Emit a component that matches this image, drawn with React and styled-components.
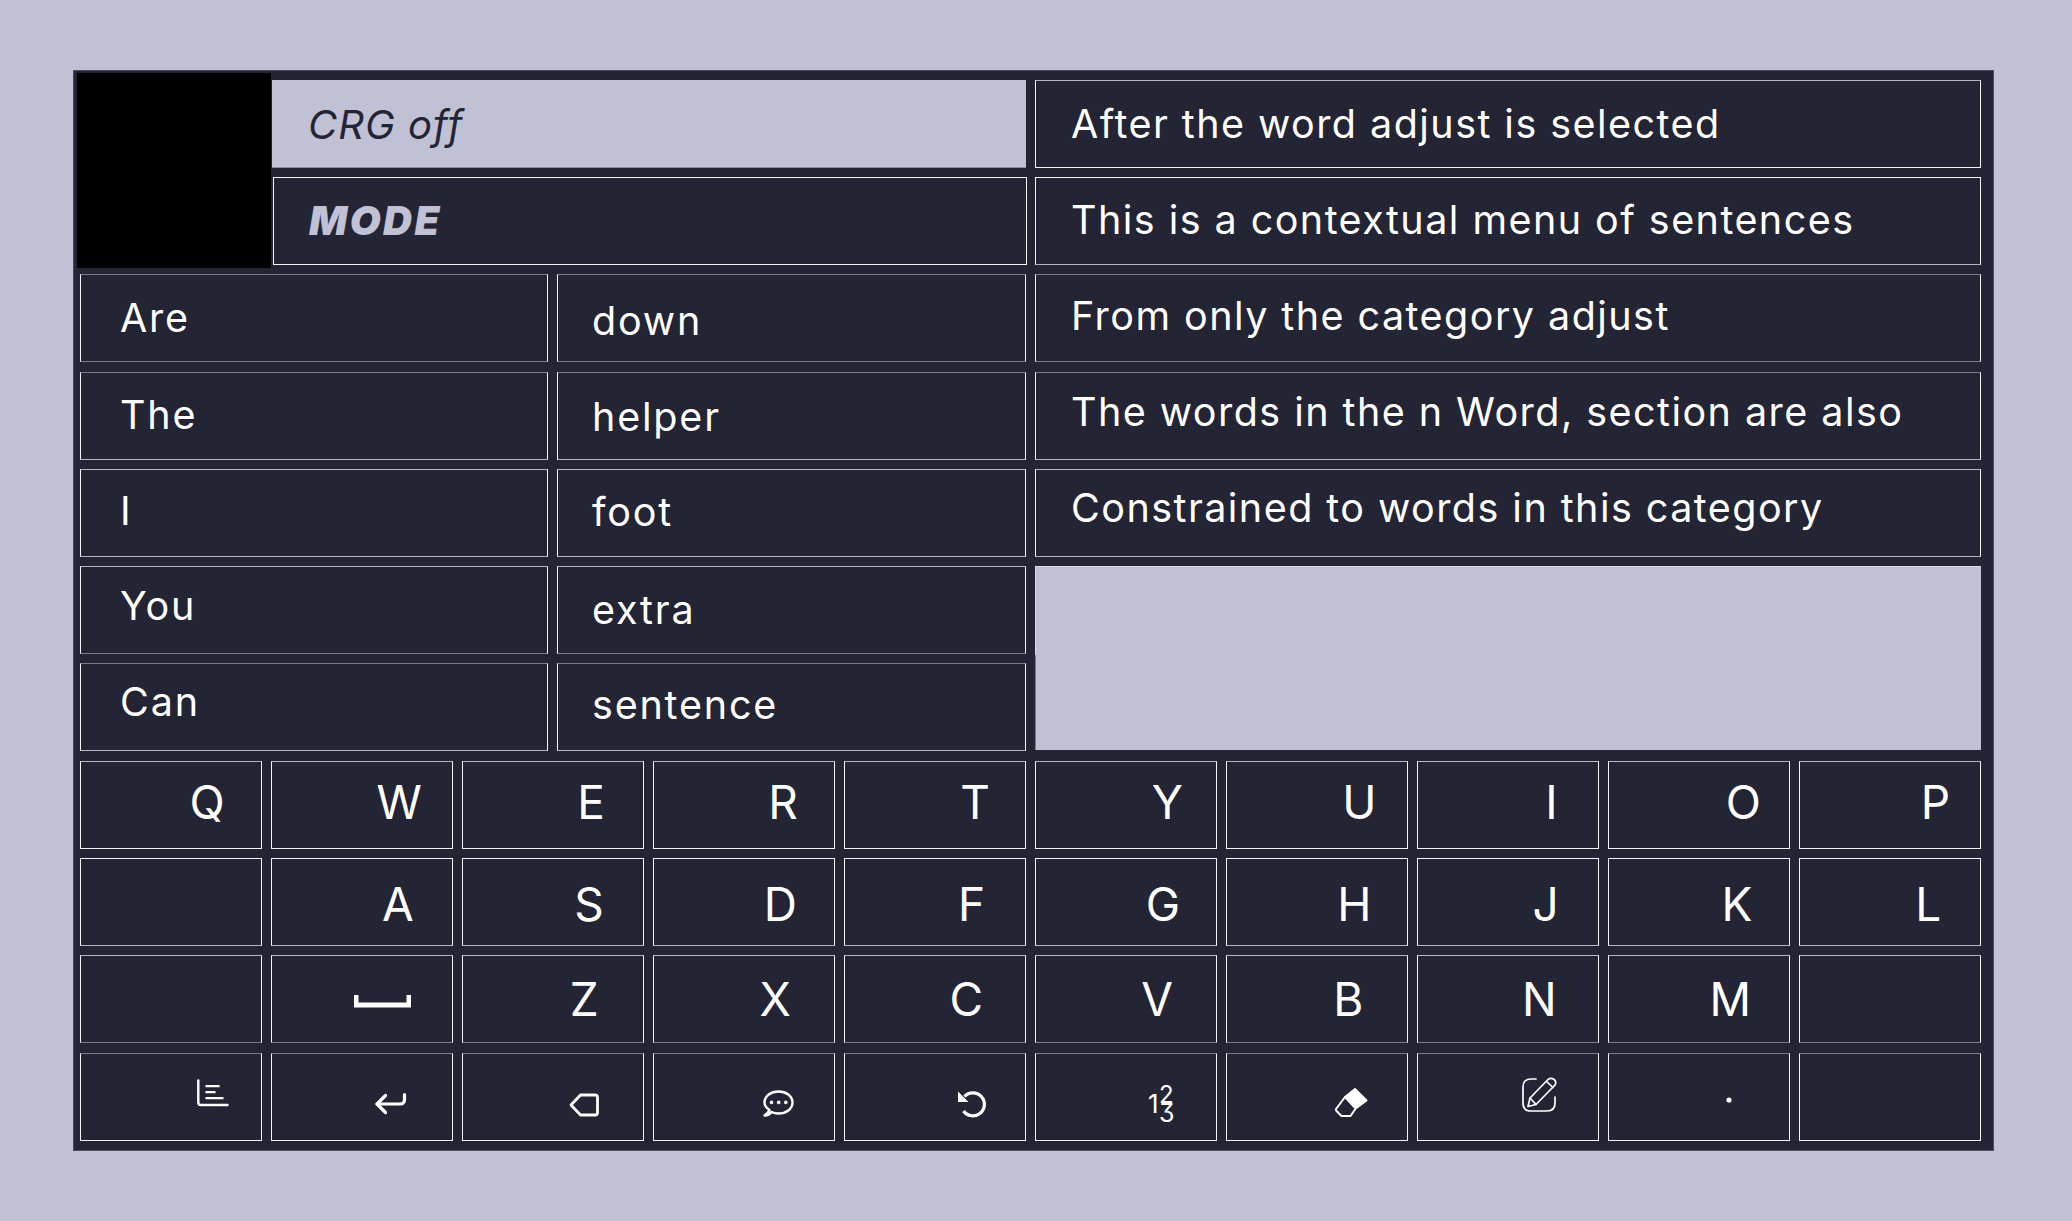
import React from "react";
import styled, { createGlobalStyle } from "styled-components";

const NAVY = "#232534";
const LILAC = "#c0c1d4";
const TONE = { W: "#f4f4f6", L: "#b4b4ba", G: "#7b7b86" };
const ROW_TONES = [
  ["L", "W"], ["W", "L"], ["G", "G"], ["G", "L"], ["L", "L"], ["L", "G"], ["G", "L"],
  ["L", "W"], ["W", "L"], ["L", "G"], ["G", "W"],
];

const Global = createGlobalStyle`
  html, body { margin: 0; padding: 0; background: ${LILAC}; }
  body { font-family: Inter, "Liberation Sans", sans-serif; }
`;

const Page = styled.div`
  width: 2072px;
  height: 1221px;
  box-sizing: border-box;
  padding: 70px 0 0 73px;
`;

const Panel = styled.main`
  width: 1921px;
  height: 1081px;
  box-sizing: border-box;
  border: 1px solid #4b4d5d;
  background: ${NAVY};
  padding: 8.7px 0 0 6px;
  display: flex;
  flex-direction: column;
  gap: 9.3px;
`;

const Upper = styled.section`
  display: grid;
  grid-template-columns: 182px 277px 469px 946px;
  grid-template-rows: repeat(7, 88px);
  column-gap: 9px;
  row-gap: 9.3px;
`;

const Keyboard = styled.section`
  display: grid;
  grid-template-columns: repeat(10, 182px);
  grid-template-rows: repeat(4, 88px);
  column-gap: 9.05px;
  row-gap: 9.3px;
`;

const Cell = styled.div`
  box-sizing: border-box;
  border: 1px solid #f4f4f6;
  border-top-color: ${(p) => TONE[ROW_TONES[p.$row][0]]};
  border-bottom-color: ${(p) => TONE[ROW_TONES[p.$row][1]]};
  color: #fff;
  display: flex;
  align-items: center;
  min-width: 0;
`;

const Avatar = styled.div`
  grid-column: 1;
  grid-row: 1 / span 2;
  background: #000;
  margin: -7px -9px -3px -3px;
`;

const StatusCell = styled.div`
  grid-column: 2 / span 2;
  grid-row: 1;
  margin-left: 1px;
  background: ${LILAC};
  border-bottom: 1px solid #8b8c9e;
  color: ${NAVY};
  display: flex;
  align-items: center;
  padding: 2px 0 0 36px;
  font-size: 40px;
  font-style: italic;
  font-weight: 400;
  letter-spacing: 1px;
`;

const ModeCell = styled(Cell)`
  grid-column: 2 / span 2;
  grid-row: 2;
  margin: 0 -1px 0 2px;
  border-color: #f4f4f6;
  padding: 0 0 0 35px;
  color: ${LILAC};
  font-size: 40px;
  font-style: italic;
  font-weight: 900;
  letter-spacing: 2.4px;
`;

const WordCell = styled(Cell)`
  grid-column: ${(p) => (p.$second ? "3" : "1 / span 2")};
  grid-row: ${(p) => p.$row + 1};
  padding: ${(p) => (p.$second ? "5px" : "0")} 0 ${(p) => p.$lift * 2}px ${(p) => (p.$second ? "34px" : "39px")};
  font-size: 39.5px;
  font-weight: 400;
  letter-spacing: 1.8px;
`;

const SentenceCell = styled(Cell)`
  grid-column: 4;
  grid-row: ${(p) => p.$row + 1};
  padding: 0 0 ${(p) => p.$lift * 2}px 35px;
  font-size: 39.5px;
  font-weight: 400;
  letter-spacing: 1.45px;
  white-space: nowrap;
`;

const BlankBlock = styled.div`
  grid-column: 4;
  grid-row: 6 / span 2;
  margin-bottom: 1px;
  background:
    linear-gradient(#d9dae6, #d9dae6) left top / 1px 88px no-repeat,
    linear-gradient(#7b7c90, #7b7c90) left bottom / 1px 96px no-repeat,
    ${LILAC};
  border-top: 1px solid #d9dae6;
`;

const LetterKey = styled(Cell)`
  justify-content: flex-end;
  padding-right: ${(p) => p.$inset}px;
  padding-top: ${(p) => Math.max(p.$shift, 0)}px;
  padding-bottom: ${(p) => Math.max(-p.$shift, 0)}px;
  font-size: 46px;
  font-weight: 400;
`;

const LetterMark = styled.span`
  width: 0;
  display: flex;
  justify-content: center;
`;

const IconKey = styled(Cell)`
  align-items: flex-start;
  justify-content: flex-end;
  padding: ${(p) => p.$top}px ${(p) => p.$right}px 0 0;
`;

const Svg = styled.svg`
  display: block;
  overflow: visible;
  fill: none;
  stroke: #fff;
  stroke-linecap: round;
  stroke-linejoin: round;
`;

const NumberGlyph = styled.text`
  fill: #fff;
  stroke: none;
  font-family: Inter, sans-serif;
  font-weight: 400;
  font-feature-settings: "cv09";
`;

const ChartIcon = () => (
  <Svg width="31" height="26" viewBox="0 0 31 26" strokeWidth="2.4">
    <path d="M1.3 0.5V22.5Q1.3 25 3.8 25H30.5" />
    <path d="M8.5 6.2H22.5M8.5 12.2H18.5M8.5 18.2H26.5" strokeLinecap="butt" strokeWidth="2.2" />
  </Svg>
);
const EnterIcon = () => (
  <Svg width="31" height="21" viewBox="0 0 31 21" strokeWidth="3.2">
    <path d="M29.5 1.5V6.5Q29.5 11 25 11H2" />
    <path d="M10.5 2.5L2 11L10.5 19.5" />
  </Svg>
);
const BackspaceIcon = () => (
  <Svg width="30" height="24" viewBox="0 0 30 24" strokeWidth="2.8">
    <path d="M2 12L11.5 2H26Q28.5 2 28.5 4.5V19.5Q28.5 22 26 22H11.5Z" />
  </Svg>
);
const ChatIcon = () => (
  <Svg width="31" height="27" viewBox="0 0 31 27" strokeWidth="2.4">
    <path d="M6.5 20C3.5 18 1.5 15.5 1.5 12.5C1.5 6 8 1.5 15.5 1.5S29.5 6 29.5 12.5S23 23.5 15.5 23.5C13 23.5 10.5 23 8.5 22C7 24 4.5 25.5 1.5 25.5C3.5 24 5.5 22.5 6.5 20Z" />
    <circle cx="8.5" cy="12.4" r="1.8" fill="#fff" stroke="none" />
    <circle cx="15.7" cy="12.4" r="1.8" fill="#fff" stroke="none" />
    <circle cx="22.8" cy="12.4" r="1.8" fill="#fff" stroke="none" />
  </Svg>
);
const UndoIcon = () => (
  <Svg width="29" height="27" viewBox="0 0 29 27" strokeWidth="3.2">
    <path d="M6.5 6.5A11.5 11.5 0 1 1 5.5 21" strokeLinecap="butt" />
    <path d="M0 1.5V12H10.5Z" fill="#fff" stroke="none" />
  </Svg>
);
const NumbersIcon = () => (
  <Svg width="24" height="35" viewBox="0 0 24 35">
    <NumberGlyph>
      <tspan x="-1" y="26" fontSize="26">1</tspan>
      <tspan x="10" y="16" fontSize="24">2</tspan>
      <tspan x="10" y="35" fontSize="25">3</tspan>
    </NumberGlyph>
  </Svg>
);
const EraserIcon = () => (
  <Svg width="32" height="29" viewBox="0 0 32 29" strokeWidth="2">
    <path d="M20 1L31.5 12.5L20.7 20.5L10 9Z" fill="#fff" />
    <path d="M10 9L1 21Q0.5 22 1.5 23L6.5 28H15.5L20.7 20.5" />
  </Svg>
);
const EditIcon = () => (
  <Svg width="35" height="35" viewBox="0 0 35 35" strokeWidth="1.7">
    <path d="M14 2H9Q1 2 1 10V26Q1 34 9 34H25Q33 34 33 26V20" />
    <path d="M6 29.5L8 21L26 2.5Q28.5 0.5 31.5 2Q35 4.5 33 8L14 27.5Z" />
    <path d="M8 21L14 27.5M24.5 4.5L31 10.5" />
  </Svg>
);
const DotIcon = () => (
  <Svg width="6" height="6" viewBox="0 0 6 6">
    <circle cx="3" cy="3" r="2.6" fill="#fff" stroke="none" />
  </Svg>
);
const SpaceIcon = () => (
  <Svg width="57" height="13" viewBox="0 0 57 13">
    <path d="M0 0H4.5V7.5H52.5V0H57V12.5H0Z" fill="#fff" stroke="none" />
  </Svg>
);

const WORDS_A = [
  { text: "Are", lift: 0 },
  { text: "The", lift: 1 },
  { text: "I", lift: 2 },
  { text: "You", lift: 4 },
  { text: "Can", lift: 5 },
];
const WORDS_B = [
  { text: "down", lift: 0 },
  { text: "helper", lift: 1 },
  { text: "foot", lift: 3 },
  { text: "extra", lift: 3 },
  { text: "sentence", lift: 5 },
];
const SENTENCES = [
  { text: "After the word adjust is selected", lift: 0 },
  { text: "This is a contextual menu of sentences", lift: 1 },
  { text: "From only the category adjust", lift: 2 },
  { text: "The words in the n Word, section are also", lift: 4 },
  { text: "Constrained to words in this category", lift: 5 },
];

const ROW_ONE = "QWERTYUIOP".split("");
const ROW_TWO = ["", ..."ASDFGHJKL".split("")];
const ROW_THREE = ["", "space", ..."ZXCVBNM".split(""), ""];
const ICON_ROW = [
  { icon: <ChartIcon />, top: 26, right: 33 },
  { icon: <EnterIcon />, top: 39, right: 46 },
  { icon: <BackspaceIcon />, top: 39, right: 44 },
  { icon: <ChatIcon />, top: 36, right: 40 },
  { icon: <UndoIcon />, top: 36, right: 38 },
  { icon: <NumbersIcon />, top: 33, right: 43 },
  { icon: <EraserIcon />, top: 34, right: 40 },
  { icon: <EditIcon />, top: 23, right: 41 },
  { icon: <DotIcon />, top: 43, right: 57 },
  { icon: null, top: 0, right: 0 },
];

const insetFor = (row, col) => {
  if (row === 7) return 54 - col;
  if (row === 8) return 54.5 - col * 0.25;
  return 59;
};

const letterRow = (letters, row, shift) =>
  letters.map((letter, col) =>
    letter === "space" ? (
      <IconKey key={`${row}-${col}`} $row={row} $top={39} $right={41}>
        <SpaceIcon />
      </IconKey>
    ) : (
      <LetterKey key={`${row}-${col}`} $row={row} $inset={insetFor(row, col)} $shift={shift}>
        <LetterMark>{letter}</LetterMark>
      </LetterKey>
    )
  );

export default function App() {
  return (
    <Page>
      <Global />
      <Panel>
        <Upper>
          <Avatar />
          <StatusCell>CRG off</StatusCell>
          <ModeCell $row={1}>MODE</ModeCell>
          {WORDS_A.map((w, i) => (
            <WordCell key={w.text} $row={i + 2} $lift={w.lift}>{w.text}</WordCell>
          ))}
          {WORDS_B.map((w, i) => (
            <WordCell key={w.text} $row={i + 2} $lift={w.lift} $second>{w.text}</WordCell>
          ))}
          {SENTENCES.map((s, i) => (
            <SentenceCell key={s.text} $row={i} $lift={s.lift}>{s.text}</SentenceCell>
          ))}
          <BlankBlock />
        </Upper>
        <Keyboard>
          {letterRow(ROW_ONE, 7, -6)}
          {letterRow(ROW_TWO, 8, 3)}
          {letterRow(ROW_THREE, 9, 0)}
          {ICON_ROW.map((k, col) => (
            <IconKey key={col} $row={10} $top={k.top} $right={k.right}>
              {k.icon}
            </IconKey>
          ))}
        </Keyboard>
      </Panel>
    </Page>
  );
}
